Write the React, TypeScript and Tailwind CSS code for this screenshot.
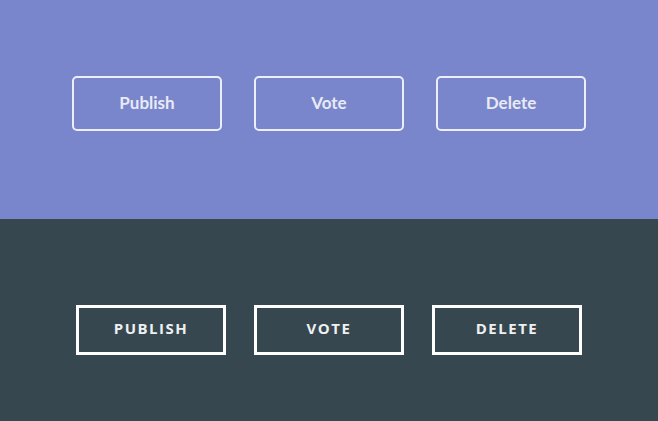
export default function App() {
  const labels = ["Publish", "Vote", "Delete"];
  return (
    <div className="w-[658px] h-[421px] overflow-hidden">
      {/* Rounded outline buttons */}
      <section className="h-[219px] bg-[#7986cb] pt-[76px]">
        <div className="flex justify-center gap-8">
          {labels.map((l) => (
            <button
              key={l}
              className="w-[150px] h-[55px] pb-[2px] rounded-[5px] border-2 border-[#eceef9] text-[#e8eaf6] text-[17px] font-bold font-['Lato',sans-serif]"
            >
              {l}
            </button>
          ))}
        </div>
      </section>

      {/* Square uppercase buttons */}
      <section className="h-[202px] bg-[#37474f] pt-[86px]">
        <div className="flex justify-center gap-7">
          {labels.map((l) => (
            <button
              key={l}
              className="w-[150px] h-[50px] pb-[3px] border-[3px] border-white text-[#eef0f1] text-[15px] font-bold uppercase tracking-[0.1em] font-['Open_Sans',sans-serif]"
            >
              {l}
            </button>
          ))}
        </div>
      </section>
    </div>
  );
}
